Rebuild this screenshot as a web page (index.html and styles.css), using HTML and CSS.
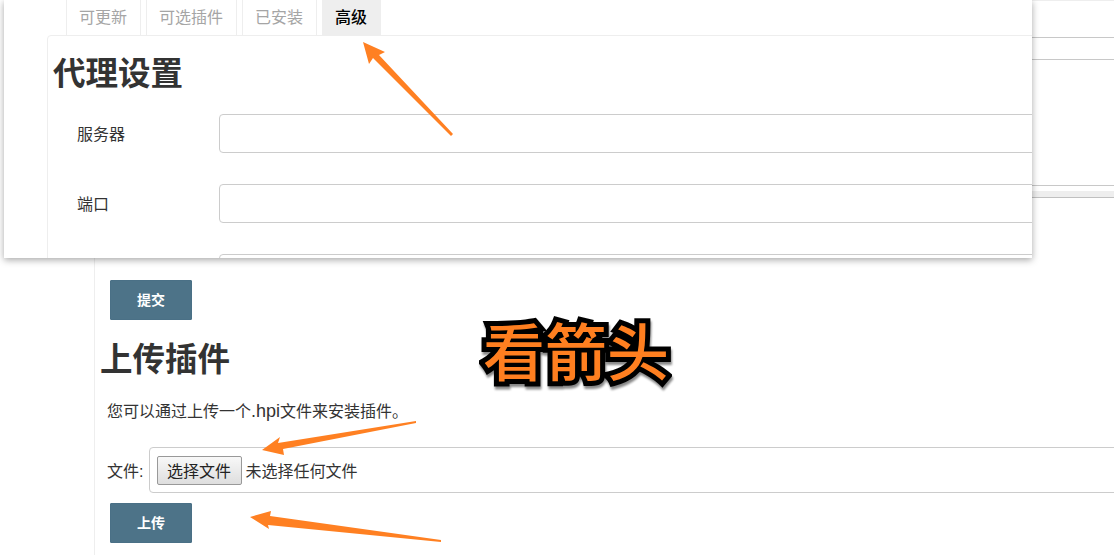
FILE: index.html
```html
<!DOCTYPE html>
<html lang="zh-CN">
<head>
<meta charset="utf-8">
<title>上传插件</title>
<link rel="stylesheet" href="styles.css">
</head>
<body>
<main class="main">
  <div class="stub stub-a"></div>
  <div class="stub stub-b"></div>
  <div class="stub stub-c"></div>
  <div class="stub-band"></div>
  <div class="content">
    <button class="btn" type="button">提交</button>
    <h2 class="title upload-title">上传插件</h2>
    <p class="hint">您可以通过上传一个<span class="ext">.hpi</span>文件来安装插件。</p>
    <div class="file-row">
      <span class="file-label">文件:</span>
      <div class="file-box">
        <button class="file-btn" type="button">选择文件</button>
        <span>未选择任何文件</span>
      </div>
    </div>
    <button class="btn" type="button">上传</button>
  </div>
</main>

<section class="window">
  <nav class="tabs">
    <a class="tab">可更新</a>
    <a class="tab">可选插件</a>
    <a class="tab">已安装</a>
    <a class="tab active">高级</a>
  </nav>
  <div class="panel">
    <h2 class="title proxy-title">代理设置</h2>
    <div class="row"><label>服务器</label><div class="input"></div></div>
    <div class="row"><label>端口</label><div class="input"></div></div>
    <div class="row"><label></label><div class="input"></div></div>
  </div>
</section>

<svg class="arrows" width="1114" height="555" viewBox="0 0 1114 555" aria-hidden="true">
  <polygon points="363,42 385,52 379,55 453,134 451,136 373,58 369,64"/>
  <polygon points="262,450 280,437 278,443 416,421 416,423 283,449 284,455"/>
  <polygon points="250,517 271,511 270,516 441,540 441,542 268,525 269,529"/>
</svg>

<div class="slogan">看箭头</div>
</body>
</html>
```

FILE: styles.css
```css
* { box-sizing: border-box; }

html, body {
  margin: 0;
  height: 555px;
  overflow: hidden;
  background: #fff;
}

body {
  position: relative;
  font-family: "Liberation Sans", "Noto Sans CJK SC", sans-serif;
  font-size: 16px;
  color: #333;
}

.main {
  margin-left: 94px;
  height: 555px;
  border-left: 1px solid #eee;
  overflow: hidden;
}

.stub { border-bottom: 1px solid #c8c8c8; }
.stub-a { height: 38px; border-top: 1px solid #eee; }
.stub-b { height: 22px; }
.stub-c { height: 126px; }

.stub-band {
  height: 12px;
  background: linear-gradient(#fff 5px, #eee 5px);
  border-bottom: 1px solid #c0c0c0;
}

.content {
  padding: 82px 0 0 15px;
}

.btn {
  display: block;
  width: 82px;
  height: 40px;
  padding: 0 0 2px;
  border: 1px solid #4a7086;
  border-radius: 1px;
  background: #4d7388;
  color: #fff;
  font: bold 14px "Liberation Sans", "Noto Sans CJK SC", sans-serif;
}

.title {
  margin: 0;
  font-size: 32.5px;
  font-weight: 700;
  line-height: 40px;
  color: #333;
}

.upload-title {
  margin: 20px 0 0 -10px;
}

.hint {
  margin: 21px 0 0 -3px;
  line-height: 22px;
}

.ext {
  font-size: 18px;
  line-height: 1;
}

.file-row {
  display: flex;
  align-items: center;
  gap: 6px;
  margin: 24px 0 10px -3px;
  width: 1100px;
}

.file-box {
  display: flex;
  align-items: center;
  gap: 3px;
  flex: 1;
  height: 46px;
  padding-left: 7px;
  border: 1px solid #ccc;
  border-radius: 4px;
}

.file-btn {
  width: 85px;
  height: 29px;
  padding: 0 2px 0 0;
  border: 1px solid #999;
  border-radius: 2px;
  background: linear-gradient(#f8f8f8, #dedede);
  color: #222;
  font: 16px "Liberation Sans", "Noto Sans CJK SC", sans-serif;
}

/* floating window */
.window {
  position: absolute;
  left: 4px;
  top: 0;
  width: 1028px;
  height: 258px;
  background: #fff;
  overflow: hidden;
  box-shadow: 0 2px 7px rgba(0, 0, 0, 0.35);
}

.tabs {
  display: flex;
  gap: 5px;
  height: 35px;
  padding-left: 62px;
}

.tab {
  display: flex;
  align-items: center;
  padding: 0 13px 0 12px;
  border: 1px solid #eee;
  border-width: 0 1px;
  color: #a5a5a5;
  line-height: 35px;
}

.tab.active {
  background: #eee;
  border-color: #eee;
  color: #000;
  font-weight: 500;
}

.panel {
  margin-left: 43px;
  width: 1100px;
  height: 240px;
  padding: 0 0 0 5px;
  border: 1px solid #eee;
  border-radius: 4px 0 0 0;
}

.proxy-title {
  margin-top: 18px;
}

.row {
  display: flex;
  align-items: center;
  height: 39px;
  margin-top: 31px;
  padding: 0 0 2px 24px;
}

.proxy-title + .row { margin-top: 20px; }

.row label {
  width: 142px;
  flex: none;
}

.input {
  flex: 1;
  height: 39px;
  position: relative;
  top: 1px;
  background: #fff;
  border: 1px solid #ccc;
  border-radius: 4px;
}

/* annotations drawn on top of the screenshot */
.arrows {
  position: absolute;
  left: 0;
  top: 0;
  fill: #ff8022;
}

.slogan {
  position: absolute;
  left: 483px;
  top: 309px;
  font-family: "Noto Sans CJK SC", "Liberation Serif", serif;
  font-size: 62px;
  font-weight: 500;
  line-height: 80px;
  white-space: nowrap;
  color: #ff7f20;
  -webkit-text-stroke: 10px #000;
  paint-order: stroke fill;
  filter: drop-shadow(1px 3px 1px #888);
}
```
